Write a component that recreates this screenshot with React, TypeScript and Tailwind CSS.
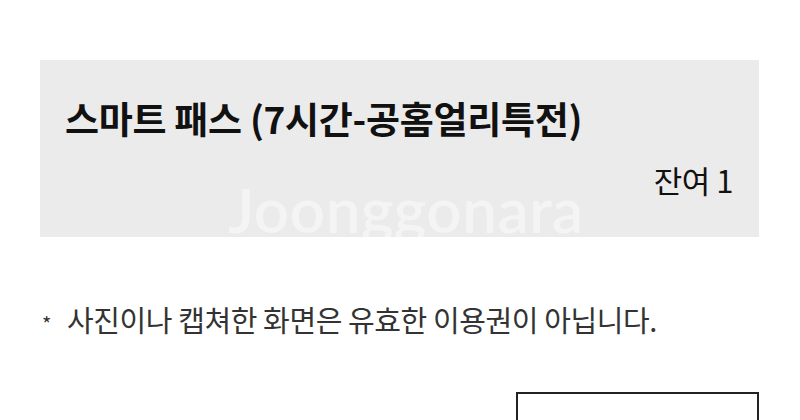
import React from 'react';

const font = { fontFamily: '"Noto Sans CJK KR", "Noto Sans", sans-serif' };

export default function App() {
  return (
    <div className="relative w-[800px] h-[420px] overflow-hidden bg-white" style={font}>
      <div className="pt-[60px] pl-[40px] pr-[41px]">
        <div className="relative bg-[#ebebeb] h-[177px] pl-[25px] pr-[26px] pt-[33px] flex flex-col">
          <h1 className="text-[37px] leading-[50px] font-bold text-[#111] tracking-[-0.3px]">
            스마트 패스 (7시간-공홈얼리특전)
          </h1>
          <div className="mt-[17px] self-end text-[31px] leading-[40px] text-[#111] tracking-[-0.5px]">잔여 1</div>
          <div className="pointer-events-none absolute left-[188px] top-[118px] text-[62px] leading-none text-white/45 font-semibold tracking-[0.5px]" style={{ fontFamily: '"Lato", sans-serif' }}>
            Joonggonara
          </div>
        </div>
      </div>
      <p className="mt-[62px] pl-[42px] text-[29px] leading-[40px] text-[#333] tracking-[-0.4px]">
        <span className="text-[20px] align-middle mr-[16px]">*</span>사진이나 캡쳐한 화면은 유효한 이용권이 아닙니다.
      </p>
      <div className="flex justify-end pr-[41px] mt-[48px]">
        <div className="w-[243px] h-[60px] border-2 border-[#222]"></div>
      </div>
    </div>
  );
}
